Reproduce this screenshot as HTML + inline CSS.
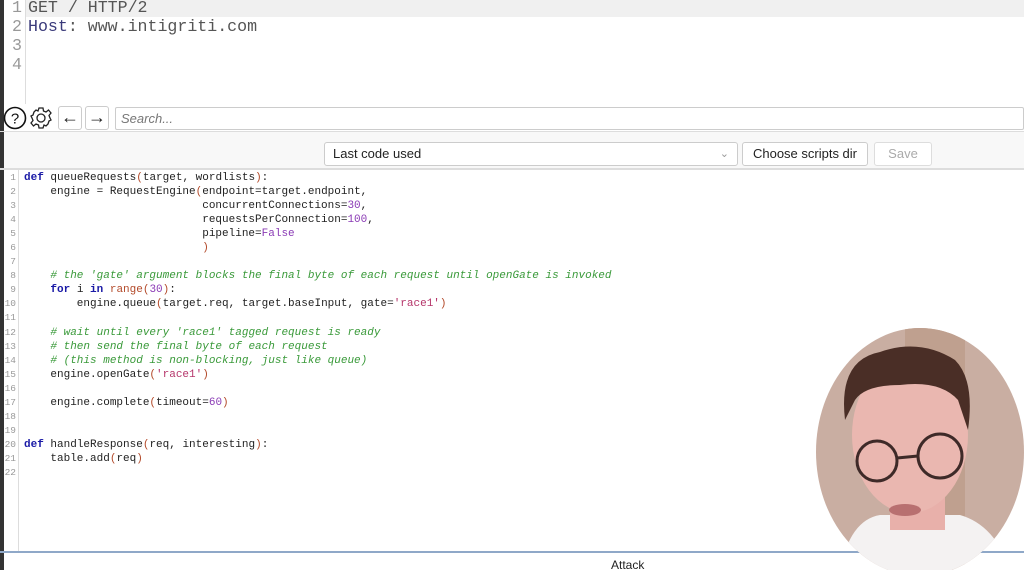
<!DOCTYPE html>
<html><head><meta charset="utf-8"><style>
*{margin:0;padding:0;box-sizing:border-box}
body{width:1024px;height:570px;overflow:hidden;background:#fff;position:relative;font-family:"Liberation Sans",sans-serif}
.abs{position:absolute}
.req{font-family:"Liberation Mono",monospace;font-size:16.6px;color:#555}
.ln{position:absolute;left:12px;color:#999;font-family:"Liberation Mono",monospace;font-size:16.6px}
pre{font-family:"Liberation Mono",monospace;font-size:11px;line-height:14.05px;color:#222}
.k{color:#1a1aa6;font-weight:bold}.c{color:#3a9a3a;font-style:italic}.n{color:#8a3ab5}.s{color:#b5356a}.p{color:#b34a2a}
.gut{font-family:"Liberation Mono",monospace;font-size:9.5px;line-height:14.05px;color:#999;text-align:right}
.btn{position:absolute;border:1px solid #ccc;border-radius:3px;background:#fff;font-size:13px;color:#222;text-align:center}
</style></head><body>
<div class="abs" style="left:0;top:0;width:4px;height:570px;background:#333"></div>
<div class="abs" style="left:26px;top:0;width:998px;height:17px;background:#f0f0f0"></div>
<div class="abs" style="left:25px;top:0;width:1px;height:104px;background:#ddd"></div>
<div class="ln" style="top:-2px">1</div><div class="ln" style="top:17px">2</div><div class="ln" style="top:36px">3</div><div class="ln" style="top:55px">4</div>
<div class="abs req" style="left:28px;top:-2px">GET / HTTP/2</div>
<div class="abs req" style="left:28px;top:17px"><span style="color:#3a3a7a">Host</span>: www.intigriti.com</div>
<svg class="abs" style="left:3px;top:106px" width="52" height="26" viewBox="0 0 52 26">
<circle cx="12" cy="12" r="10.5" fill="none" stroke="#111" stroke-width="1.6"/>
<text x="12" y="17.5" font-size="15" text-anchor="middle" font-family="Liberation Sans" fill="#111">?</text>
<g transform="translate(38,12)" fill="none" stroke="#222" stroke-width="1.3">
<circle r="4"/>
<path d="M-2,-10 L2,-10 L2.5,-7 L5,-6 L7.5,-8 L10,-5 L8,-2.5 L9,0 L10,2 L8,3 L7,6 L5,8 L3,7 L2,10 L-2,10 L-2.5,7 L-5,6 L-7.5,8 L-10,5 L-8,2.5 L-9,0 L-10,-2 L-8,-3 L-7,-6 L-5,-8 L-3,-7 Z"/>
</g></svg>
<div class="btn" style="left:58px;top:106px;width:24px;height:24px;font-size:18px;line-height:20px">&larr;</div>
<div class="btn" style="left:85px;top:106px;width:24px;height:24px;font-size:18px;line-height:20px">&rarr;</div>
<div class="abs" style="left:115px;top:107px;width:909px;height:23px;border:1px solid #ccc;border-radius:2px"></div>
<div class="abs" style="left:121px;top:111px;font-size:13px;font-style:italic;color:#777">Search...</div>
<div class="abs" style="left:0;top:131px;width:1024px;height:1px;background:#ddd"></div>
<div class="abs" style="left:622px;top:128px;font-size:9px;color:#999">...</div>
<div class="abs" style="left:4px;top:132px;width:1020px;height:36px;background:#f8f8f8"></div>
<div class="btn" style="left:324px;top:142px;width:414px;height:24px;text-align:left;padding-left:8px;line-height:22px">Last code used<span style="position:absolute;right:8px;color:#999;font-size:11px">&#8964;</span></div>
<div class="btn" style="left:742px;top:142px;width:126px;height:24px;line-height:22px">Choose scripts dir</div>
<div class="btn" style="left:874px;top:142px;width:58px;height:24px;line-height:22px;color:#aaa;border-color:#ddd">Save</div>
<div class="abs" style="left:0;top:168px;width:1024px;height:2px;background:#ddd"></div>
<div class="abs" style="left:18px;top:170px;width:1px;height:382px;background:#ddd"></div>
<div class="abs gut" style="left:4px;top:171px;width:12px">1<br>2<br>3<br>4<br>5<br>6<br>7<br>8<br>9<br>10<br>11<br>12<br>13<br>14<br>15<br>16<br>17<br>18<br>19<br>20<br>21<br>22</div>
<pre class="abs" style="left:24px;top:171px"><span class="k">def</span> queueRequests<span class="p">(</span>target, wordlists<span class="p">)</span>:
    engine = RequestEngine<span class="p">(</span>endpoint=target.endpoint,
                           concurrentConnections=<span class="n">30</span>,
                           requestsPerConnection=<span class="n">100</span>,
                           pipeline=<span class="n">False</span>
                           <span class="p">)</span>

    <span class="c"># the 'gate' argument blocks the final byte of each request until openGate is invoked</span>
    <span class="k">for</span> i <span class="k">in</span> <span class="p">range(</span><span class="n">30</span><span class="p">)</span>:
        engine.queue<span class="p">(</span>target.req, target.baseInput, gate=<span class="s">'race1'</span><span class="p">)</span>

    <span class="c"># wait until every 'race1' tagged request is ready</span>
    <span class="c"># then send the final byte of each request</span>
    <span class="c"># (this method is non-blocking, just like queue)</span>
    engine.openGate<span class="p">(</span><span class="s">'race1'</span><span class="p">)</span>

    engine.complete<span class="p">(</span>timeout=<span class="n">60</span><span class="p">)</span>


<span class="k">def</span> handleResponse<span class="p">(</span>req, interesting<span class="p">)</span>:
    table.add<span class="p">(</span>req<span class="p">)</span>
</pre>
<div class="abs" style="left:0;top:551px;width:1024px;height:2px;background:#8fa8c8"></div>
<div class="abs" style="left:611px;top:558px;font-size:12px;color:#222">Attack</div>
<svg class="abs" style="left:0;top:0" width="1024" height="570">
<defs><clipPath id="cl"><ellipse cx="920" cy="452" rx="104" ry="124"/></clipPath></defs>
<g clip-path="url(#cl)">
<rect x="810" y="320" width="220" height="260" fill="#c9aea2"/>
<rect x="905" y="320" width="60" height="250" fill="#bfa08f"/>
<path d="M840,570 Q850,520 880,515 L960,515 Q995,525 1010,570 Z" fill="#f4f2f2"/>
<rect x="890" y="470" width="55" height="60" fill="#e8b0aa"/>
<ellipse cx="910" cy="435" rx="58" ry="78" fill="#eab7b0"/>
<path d="M845,420 Q838,360 880,352 Q920,338 955,360 Q975,380 968,430 L958,400 Q940,380 900,385 Q865,385 855,400 Z" fill="#4a2e26"/>
<circle cx="877" cy="461" r="20" fill="none" stroke="#3e2a28" stroke-width="3"/>
<circle cx="940" cy="456" r="22" fill="none" stroke="#3e2a28" stroke-width="3"/>
<path d="M897,458 L918,456" stroke="#3e2a28" stroke-width="3"/>
<ellipse cx="905" cy="510" rx="16" ry="6" fill="#b87070"/>
</g></svg>
</body></html>
